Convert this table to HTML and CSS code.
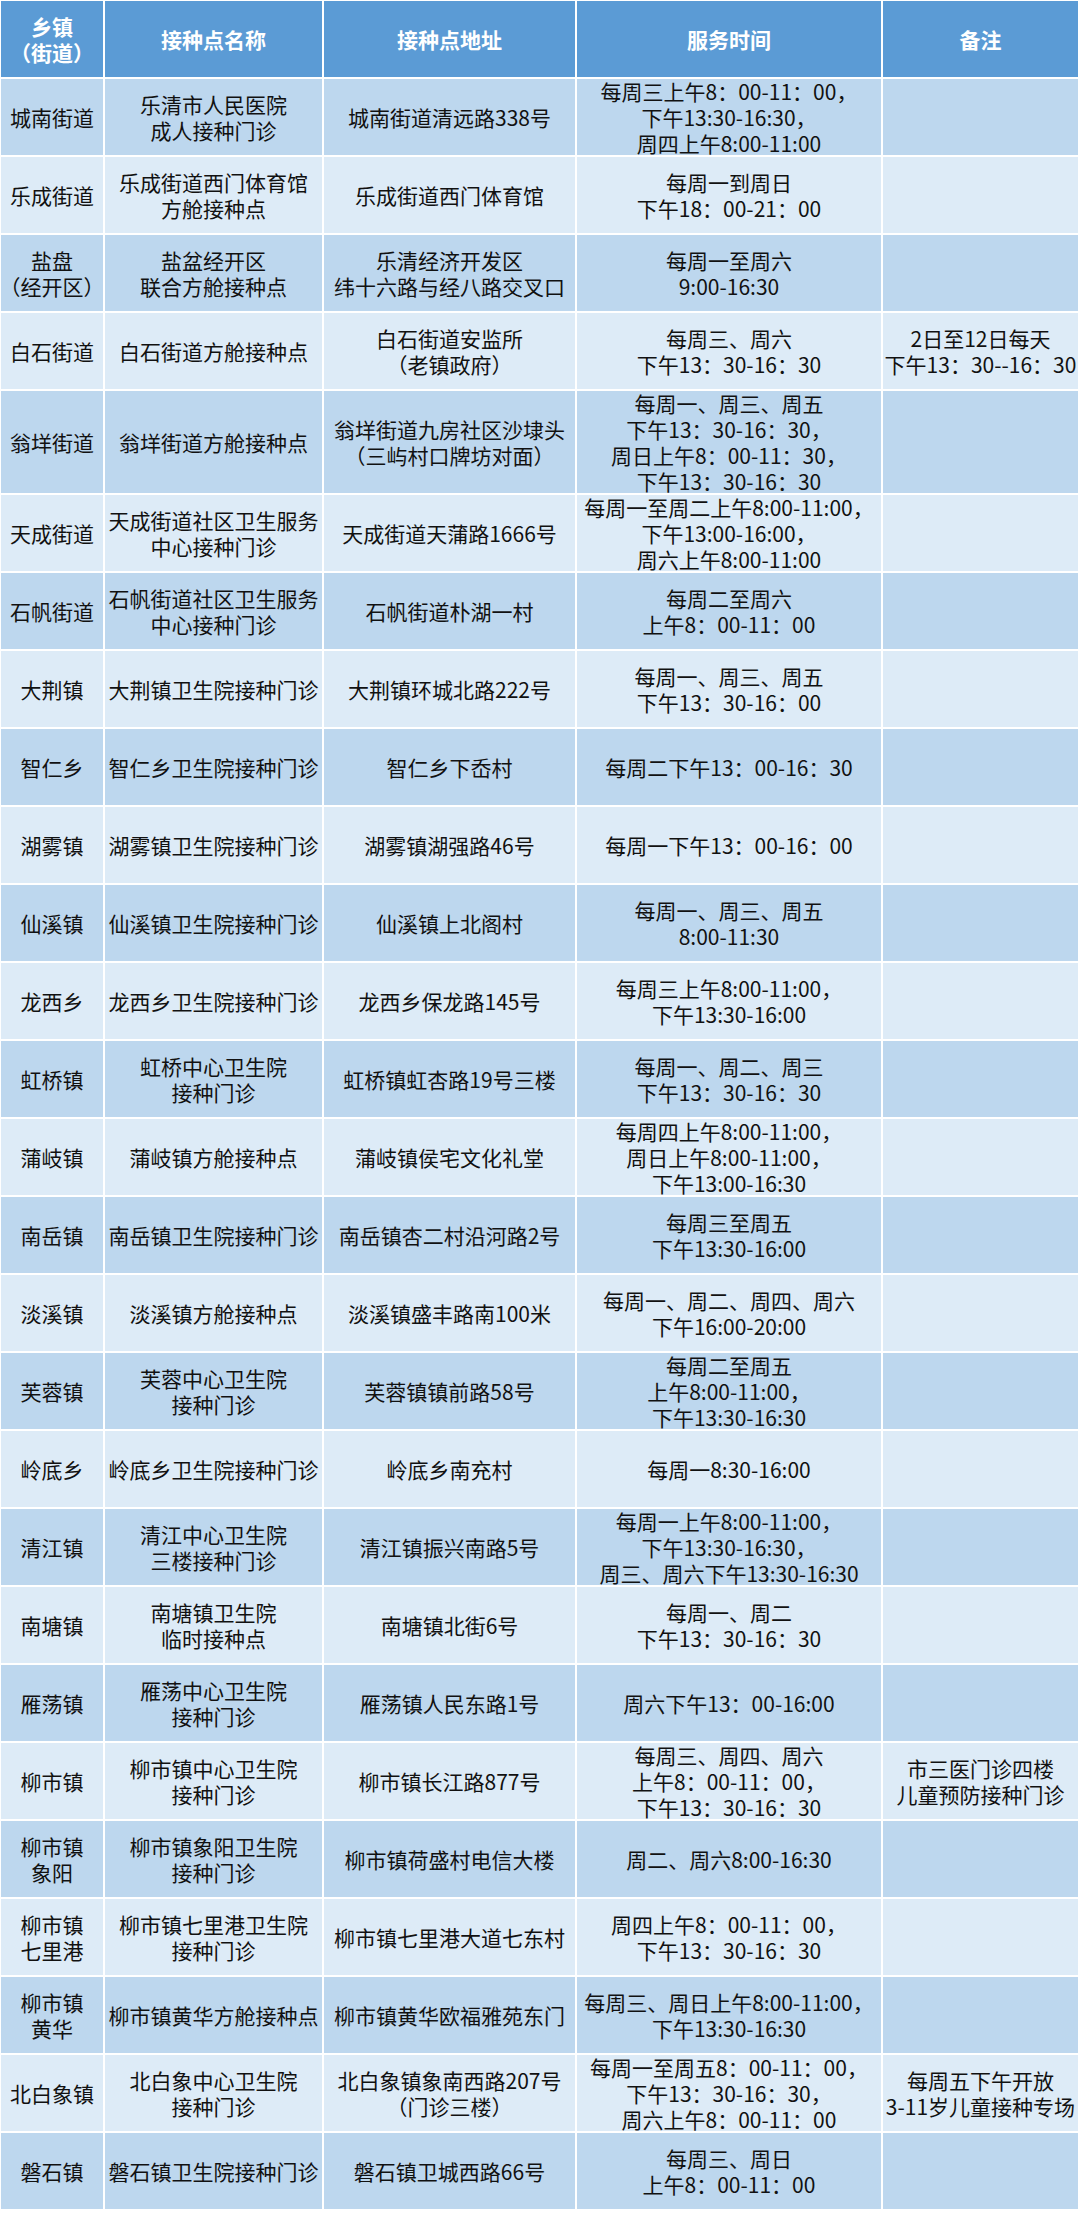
FILE: index.html
```html
<!DOCTYPE html>
<html lang="zh-CN">
<head>
<meta charset="utf-8">
<title>接种点信息</title>
<link rel="stylesheet" href="styles.css">
</head>
<body>
<div class="sheet">
  <div class="row head">
    <div class="cell">乡镇<br>（街道）</div>
    <div class="cell">接种点名称</div>
    <div class="cell">接种点地址</div>
    <div class="cell">服务时间</div>
    <div class="cell">备注</div>
  </div>
  <div class="row dark"><div class="cell">城南街道</div><div class="cell">乐清市人民医院<br>成人接种门诊</div><div class="cell">城南街道清远路338号</div><div class="cell">每周三上午8：00-11：00，<br>下午13:30-16:30，<br>周四上午8:00-11:00</div><div class="cell"></div></div>
  <div class="row light"><div class="cell">乐成街道</div><div class="cell">乐成街道西门体育馆<br>方舱接种点</div><div class="cell">乐成街道西门体育馆</div><div class="cell">每周一到周日<br>下午18：00-21：00</div><div class="cell"></div></div>
  <div class="row dark"><div class="cell">盐盘<br>（经开区）</div><div class="cell">盐盆经开区<br>联合方舱接种点</div><div class="cell">乐清经济开发区<br>纬十六路与经八路交叉口</div><div class="cell">每周一至周六<br>9:00-16:30</div><div class="cell"></div></div>
  <div class="row light"><div class="cell">白石街道</div><div class="cell">白石街道方舱接种点</div><div class="cell">白石街道安监所<br>（老镇政府）</div><div class="cell">每周三、周六<br>下午13：30-16：30</div><div class="cell">2日至12日每天<br>下午13：30--16：30</div></div>
  <div class="row dark tall"><div class="cell">翁垟街道</div><div class="cell">翁垟街道方舱接种点</div><div class="cell">翁垟街道九房社区沙埭头<br>（三屿村口牌坊对面）</div><div class="cell">每周一、周三、周五<br>下午13：30-16：30，<br>周日上午8：00-11：30，<br>下午13：30-16：30</div><div class="cell"></div></div>
  <div class="row light"><div class="cell">天成街道</div><div class="cell">天成街道社区卫生服务<br>中心接种门诊</div><div class="cell">天成街道天蒲路1666号</div><div class="cell">每周一至周二上午8:00-11:00，<br>下午13:00-16:00，<br>周六上午8:00-11:00</div><div class="cell"></div></div>
  <div class="row dark"><div class="cell">石帆街道</div><div class="cell">石帆街道社区卫生服务<br>中心接种门诊</div><div class="cell">石帆街道朴湖一村</div><div class="cell">每周二至周六<br>上午8：00-11：00</div><div class="cell"></div></div>
  <div class="row light"><div class="cell">大荆镇</div><div class="cell">大荆镇卫生院接种门诊</div><div class="cell">大荆镇环城北路222号</div><div class="cell">每周一、周三、周五<br>下午13：30-16：00</div><div class="cell"></div></div>
  <div class="row dark"><div class="cell">智仁乡</div><div class="cell">智仁乡卫生院接种门诊</div><div class="cell">智仁乡下岙村</div><div class="cell">每周二下午13：00-16：30</div><div class="cell"></div></div>
  <div class="row light"><div class="cell">湖雾镇</div><div class="cell">湖雾镇卫生院接种门诊</div><div class="cell">湖雾镇湖强路46号</div><div class="cell">每周一下午13：00-16：00</div><div class="cell"></div></div>
  <div class="row dark"><div class="cell">仙溪镇</div><div class="cell">仙溪镇卫生院接种门诊</div><div class="cell">仙溪镇上北阁村</div><div class="cell">每周一、周三、周五<br>8:00-11:30</div><div class="cell"></div></div>
  <div class="row light"><div class="cell">龙西乡</div><div class="cell">龙西乡卫生院接种门诊</div><div class="cell">龙西乡保龙路145号</div><div class="cell">每周三上午8:00-11:00，<br>下午13:30-16:00</div><div class="cell"></div></div>
  <div class="row dark"><div class="cell">虹桥镇</div><div class="cell">虹桥中心卫生院<br>接种门诊</div><div class="cell">虹桥镇虹杏路19号三楼</div><div class="cell">每周一、周二、周三<br>下午13：30-16：30</div><div class="cell"></div></div>
  <div class="row light"><div class="cell">蒲岐镇</div><div class="cell">蒲岐镇方舱接种点</div><div class="cell">蒲岐镇侯宅文化礼堂</div><div class="cell">每周四上午8:00-11:00，<br>周日上午8:00-11:00，<br>下午13:00-16:30</div><div class="cell"></div></div>
  <div class="row dark"><div class="cell">南岳镇</div><div class="cell">南岳镇卫生院接种门诊</div><div class="cell">南岳镇杏二村沿河路2号</div><div class="cell">每周三至周五<br>下午13:30-16:00</div><div class="cell"></div></div>
  <div class="row light"><div class="cell">淡溪镇</div><div class="cell">淡溪镇方舱接种点</div><div class="cell">淡溪镇盛丰路南100米</div><div class="cell">每周一、周二、周四、周六<br>下午16:00-20:00</div><div class="cell"></div></div>
  <div class="row dark"><div class="cell">芙蓉镇</div><div class="cell">芙蓉中心卫生院<br>接种门诊</div><div class="cell">芙蓉镇镇前路58号</div><div class="cell">每周二至周五<br>上午8:00-11:00，<br>下午13:30-16:30</div><div class="cell"></div></div>
  <div class="row light"><div class="cell">岭底乡</div><div class="cell">岭底乡卫生院接种门诊</div><div class="cell">岭底乡南充村</div><div class="cell">每周一8:30-16:00</div><div class="cell"></div></div>
  <div class="row dark"><div class="cell">清江镇</div><div class="cell">清江中心卫生院<br>三楼接种门诊</div><div class="cell">清江镇振兴南路5号</div><div class="cell">每周一上午8:00-11:00，<br>下午13:30-16:30，<br>周三、周六下午13:30-16:30</div><div class="cell"></div></div>
  <div class="row light"><div class="cell">南塘镇</div><div class="cell">南塘镇卫生院<br>临时接种点</div><div class="cell">南塘镇北街6号</div><div class="cell">每周一、周二<br>下午13：30-16：30</div><div class="cell"></div></div>
  <div class="row dark"><div class="cell">雁荡镇</div><div class="cell">雁荡中心卫生院<br>接种门诊</div><div class="cell">雁荡镇人民东路1号</div><div class="cell">周六下午13：00-16:00</div><div class="cell"></div></div>
  <div class="row light"><div class="cell">柳市镇</div><div class="cell">柳市镇中心卫生院<br>接种门诊</div><div class="cell">柳市镇长江路877号</div><div class="cell">每周三、周四、周六<br>上午8：00-11：00，<br>下午13：30-16：30</div><div class="cell">市三医门诊四楼<br>儿童预防接种门诊</div></div>
  <div class="row dark"><div class="cell">柳市镇<br>象阳</div><div class="cell">柳市镇象阳卫生院<br>接种门诊</div><div class="cell">柳市镇荷盛村电信大楼</div><div class="cell">周二、周六8:00-16:30</div><div class="cell"></div></div>
  <div class="row light"><div class="cell">柳市镇<br>七里港</div><div class="cell">柳市镇七里港卫生院<br>接种门诊</div><div class="cell">柳市镇七里港大道七东村</div><div class="cell">周四上午8：00-11：00，<br>下午13：30-16：30</div><div class="cell"></div></div>
  <div class="row dark"><div class="cell">柳市镇<br>黄华</div><div class="cell">柳市镇黄华方舱接种点</div><div class="cell">柳市镇黄华欧福雅苑东门</div><div class="cell">每周三、周日上午8:00-11:00，<br>下午13:30-16:30</div><div class="cell"></div></div>
  <div class="row light"><div class="cell">北白象镇</div><div class="cell">北白象中心卫生院<br>接种门诊</div><div class="cell">北白象镇象南西路207号<br>（门诊三楼）</div><div class="cell">每周一至周五8：00-11：00，<br>下午13：30-16：30，<br>周六上午8：00-11：00</div><div class="cell">每周五下午开放<br>3-11岁儿童接种专场</div></div>
  <div class="row dark"><div class="cell">磐石镇</div><div class="cell">磐石镇卫生院接种门诊</div><div class="cell">磐石镇卫城西路66号</div><div class="cell">每周三、周日<br>上午8：00-11：00</div><div class="cell"></div></div>
</div>
</body>
</html>
```

FILE: styles.css
```css
html, body {
  margin: 0;
  padding: 0;
  background: #ffffff;
}

body {
  font-family: "Noto Sans CJK SC", "Noto Sans", sans-serif;
  color: #111111;
}

.sheet {
  width: 1080px;
  display: flex;
  flex-direction: column;
  padding-top: 1px;
  background: #ffffff;
}

.row {
  display: grid;
  grid-template-columns: 102px 217px 251px 304px 195px;
  column-gap: 2px;
  height: 78px;
  box-sizing: border-box;
  padding: 0 2px 2px 1px;
  background: #ffffff;
}

.row.tall {
  height: 104px;
}

.cell {
  display: flex;
  flex-direction: column;
  align-items: center;
  justify-content: center;
  text-align: center;
  font-size: 21px;
  line-height: 26px;
  white-space: nowrap;
  overflow: visible;
  min-height: 0;
}

.head .cell {
  background: #5b9bd5;
  color: #ffffff;
  font-weight: 700;
}

.dark .cell {
  background: #bdd7ee;
}

.light .cell {
  background: #ddebf7;
}
```
